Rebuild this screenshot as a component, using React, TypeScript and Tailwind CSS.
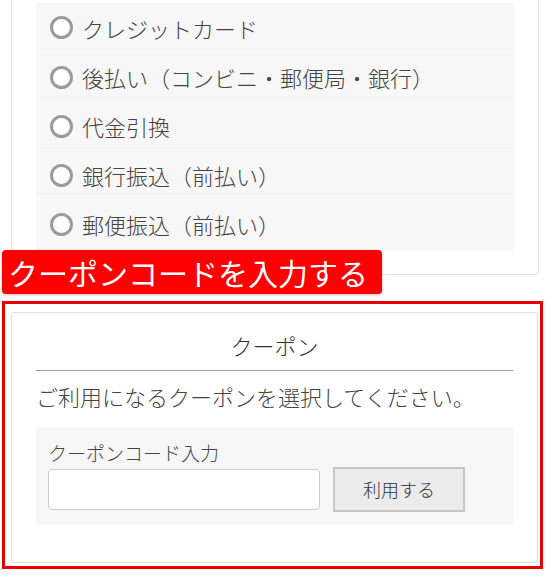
const font = { fontFamily: '"Noto Sans CJK JP", "Noto Sans", sans-serif' };

const methods = [
  'クレジットカード',
  '後払い（コンビニ・郵便局・銀行）',
  '代金引換',
  '銀行振込（前払い）',
  '郵便振込（前払い）',
];

function PaymentCard() {
  return (
    <div className="ml-[11px] w-[528px] rounded-b-[4px] border-x border-b border-[#e3e3e3] px-6 pb-6 pt-[3px]">
      <div className="bg-[#f7f7f7] pb-[2px]">
        {methods.map((m, i) => (
          <label
            key={m}
            className={`flex h-[49px] items-center pl-[14px] ${i > 0 ? 'border-t border-[#fbfbfb]' : ''}`}
          >
            <span className="box-border block size-[23px] shrink-0 rounded-full border-[3px] border-[#9b9b9b] bg-white" />
            <span className="ml-[9px] text-[22px] font-light leading-none text-[#444]">{m}</span>
          </label>
        ))}
      </div>
    </div>
  );
}

function CouponCard() {
  return (
    <div className="mb-[3px] ml-[6px] mr-[2px] mt-[8px] rounded-[3px] border border-[#e0e0e0] px-6 pb-[37px] pt-[16px]">
      <div className="border-b border-[#999] pb-[8px] text-center text-[22px] font-light leading-[33px] text-[#333]">
        クーポン
      </div>
      <p className="mt-[9px] text-[22px] font-light leading-[33px] text-[#444]">
        ご利用になるクーポンを選択してください。
      </p>
      <div className="mt-[14px] bg-[#f6f6f6] px-3 pb-[13px] pt-3">
        <div className="text-[19px] font-light leading-[28px] text-[#444]">クーポンコード入力</div>
        <div className="flex items-center gap-[13px]">
          <input
            type="text"
            className="h-[41px] w-[272px] rounded-[4px] border border-[#cccccc] bg-white px-2 outline-none"
          />
          <button
            type="button"
            className="h-[45px] w-[132px] border-2 border-[#c6c6c6] bg-[#ebebeb] text-[18px] font-light text-[#333]"
            style={font}
          >
            利用する
          </button>
        </div>
      </div>
    </div>
  );
}

export default function App() {
  return (
    <div className="h-[584px] w-[552px] overflow-hidden bg-white" style={font}>
      <PaymentCard />
      <div className="relative z-10 -mt-[25px] ml-[2px] flex h-[44px] w-[380px] items-center rounded-[4px] bg-[#ff0000] pb-[1px] pl-[6px] shadow-[0_1px_3px_rgba(0,0,0,0.25)]">
        <span className="text-[30px] leading-none text-white">クーポンコードを入力する</span>
      </div>
      <div className="ml-[2px] mt-[7px] w-[541px] border-[3px] border-[#e60000]">
        <CouponCard />
      </div>
    </div>
  );
}
